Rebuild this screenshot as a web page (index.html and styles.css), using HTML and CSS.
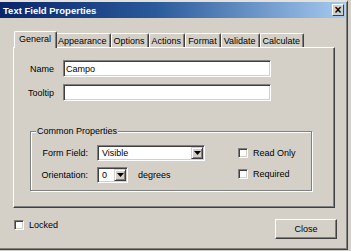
FILE: index.html
```html
<!DOCTYPE html>
<html lang="en">
<head>
  <meta charset="UTF-8">
  <title>Text Field Properties</title>
  <link rel="stylesheet" href="styles.css">
</head>
<body>
  <div class="window">
    <div class="titlebar">
      <span class="title">Text Field Properties</span>
      <span class="close-x">&#215;</span>
    </div>
    <div class="content">
      <div class="tabs">
        <div class="tab active">General</div>
        <div class="tab">Appearance</div>
        <div class="tab">Options</div>
        <div class="tab">Actions</div>
        <div class="tab">Format</div>
        <div class="tab">Validate</div>
        <div class="tab">Calculate</div>
      </div>
      <div class="panel">
        <div class="fields">
          <label for="name">Name</label>
          <input type="text" id="name" class="field" value="Campo">
          <label for="tooltip">Tooltip</label>
          <input type="text" id="tooltip" class="field">
        </div>
        <div class="group">
          <span class="group-title">Common Properties</span>
          <div class="props">
            <span class="prop-label">Form Field:</span>
            <div class="select select-wide">
              <span class="select-value">Visible</span>
              <span class="select-arrow"><svg width="7" height="4" viewBox="0 0 7 4"><polygon points="0,0 7,0 3.5,4" fill="#000"/></svg></span>
            </div>
            <span class="prop-label">Orientation:</span>
            <div class="prop-row">
              <div class="select select-small">
                <span class="select-value">0</span>
                <span class="select-arrow"><svg width="7" height="4" viewBox="0 0 7 4"><polygon points="0,0 7,0 3.5,4" fill="#000"/></svg></span>
              </div>
              <span>degrees</span>
            </div>
          </div>
          <div class="checks">
            <label class="check"><span class="box"></span>Read Only</label>
            <label class="check"><span class="box"></span>Required</label>
          </div>
        </div>
      </div>
      <div class="footer">
        <label class="check locked"><span class="box"></span>Locked</label>
        <button class="btn">Close</button>
      </div>
    </div>
  </div>
</body>
</html>
```

FILE: styles.css
```css
html, body {
  margin: 0;
  padding: 0;
}

body {
  background-color: #d4d0c8;
  font-family: "Liberation Sans", Arial, sans-serif;
  font-size: 9px;
  color: #000;
  overflow: hidden;
}

.window {
  width: 348px;
  height: 250px;
  box-sizing: border-box;
  border-top: 2px solid #e4e1da;
  border-right: 1px solid #404040;
  border-bottom: 1px solid #404040;
  box-shadow: inset -1px -1px 0 #808080;
  background-color: #d4d0c8;
}

.titlebar {
  width: 345px;
  height: 16px;
  box-sizing: border-box;
  padding: 0 1px 0 3px;
  display: flex;
  align-items: center;
  justify-content: space-between;
  background: linear-gradient(to right, #0a246a, #2a5a9a 45%, #a6caf0);
  color: #fff;
}

.title {
  font-weight: bold;
  font-size: 9.5px;
}

.close-x {
  width: 12px;
  height: 12px;
  box-sizing: border-box;
  display: flex;
  align-items: center;
  justify-content: center;
  background-color: #d4d0c8;
  color: #000;
  font-weight: bold;
  font-size: 12px;
  line-height: 1;
  border-top: 1px solid #fff;
  border-left: 1px solid #fff;
  border-right: 1px solid #404040;
  border-bottom: 1px solid #404040;
}

.content {
  padding-left: 13px;
}

/* tab strip */
.tabs {
  display: flex;
  align-items: flex-end;
  height: 16px;
  margin-top: 13px;
  padding-left: 3px;
}

.tab {
  height: 14px;
  line-height: 14px;
  padding: 0 3px 0 2px;
  border-top: 1px solid #fff;
  border-left: 1px solid #fff;
  border-right: 1px solid #404040;
  box-shadow: inset -1px 0 0 #808080;
  border-radius: 2px 2px 0 0;
  box-sizing: border-box;
  white-space: nowrap;
}

.tab.active {
  position: relative;
  z-index: 1;
  height: 17px;
  line-height: 14px;
  margin: 0 -2px -1px -2px;
  padding: 0 5px 0 4px;
  background-color: #d4d0c8;
}

.panel {
  width: 322px;
  height: 161px;
  box-sizing: border-box;
  padding-top: 12px;
  border-top: 1px solid #fff;
  border-left: 1px solid #fff;
  border-right: 1px solid #404040;
  border-bottom: 1px solid #404040;
  box-shadow: inset -1px -1px 0 #808080;
}

.fields {
  display: grid;
  grid-template-columns: 40px 208px;
  column-gap: 9px;
  row-gap: 7px;
  align-items: center;
}

.fields label {
  text-align: right;
}

.field {
  height: 17px;
  margin: 0;
  padding: 0 2px;
  box-sizing: border-box;
  font-family: inherit;
  font-size: 9px;
  background-color: #fff;
  border-top: 1px solid #808080;
  border-left: 1px solid #808080;
  border-right: 1px solid #fff;
  border-bottom: 1px solid #fff;
  box-shadow: inset 1px 1px 0 #404040, inset -1px -1px 0 #d4d0c8;
  outline: none;
}

/* group box */
.group {
  position: relative;
  width: 282px;
  height: 60px;
  box-sizing: border-box;
  margin: 30px 0 0 16px;
  padding-top: 13px;
  display: flex;
  border: 1px solid #808080;
  box-shadow: inset 1px 1px 0 #fff, 1px 1px 0 #fff;
}

.group-title {
  position: absolute;
  top: -6px;
  left: 5px;
  padding: 0 1px;
  background-color: #d4d0c8;
}

.props {
  display: grid;
  grid-template-columns: 57px auto;
  column-gap: 9px;
  row-gap: 6px;
  align-items: center;
  align-content: start;
}

.prop-label {
  text-align: right;
}

.prop-row {
  display: flex;
  align-items: center;
  gap: 10px;
}

.select {
  height: 16px;
  box-sizing: border-box;
  display: flex;
  align-items: stretch;
  background-color: #fff;
  border-top: 1px solid #808080;
  border-left: 1px solid #808080;
  border-right: 1px solid #fff;
  border-bottom: 1px solid #fff;
  box-shadow: inset 1px 1px 0 #404040, inset -1px -1px 0 #d4d0c8;
  padding: 1px;
}

.select-wide {
  width: 108px;
}

.select-small {
  width: 31px;
}

.select-value {
  flex: 1;
  padding-left: 3px;
  line-height: 12px;
}

.select-arrow {
  width: 12px;
  box-sizing: border-box;
  display: flex;
  align-items: center;
  justify-content: center;
  background-color: #d4d0c8;
  border-top: 1px solid #d4d0c8;
  border-left: 1px solid #d4d0c8;
  border-right: 1px solid #404040;
  border-bottom: 1px solid #404040;
  box-shadow: inset 1px 1px 0 #fff, inset -1px -1px 0 #808080;
}

.checks {
  display: flex;
  flex-direction: column;
  gap: 11px;
  margin-left: 33px;
  padding-top: 3px;
}

.check {
  display: flex;
  align-items: center;
  gap: 5px;
  line-height: 10px;
}

.box {
  width: 10px;
  height: 10px;
  box-sizing: border-box;
  background-color: #fff;
  border-top: 1px solid #808080;
  border-left: 1px solid #808080;
  border-right: 1px solid #fff;
  border-bottom: 1px solid #fff;
  box-shadow: inset 1px 1px 0 #404040, inset -1px -1px 0 #d4d0c8;
}

.footer {
  width: 324px;
  margin-top: 11px;
  padding-left: 1px;
  box-sizing: border-box;
  display: flex;
  justify-content: space-between;
  align-items: flex-start;
}

.locked {
  margin-top: 1px;
}

.btn {
  width: 62px;
  height: 20px;
  margin: 0;
  padding: 0;
  font-family: inherit;
  font-size: 9px;
  color: #000;
  background-color: #d4d0c8;
  border-top: 1px solid #fff;
  border-left: 1px solid #fff;
  border-right: 1px solid #404040;
  border-bottom: 1px solid #404040;
  box-shadow: inset -1px -1px 0 #808080;
}
```
